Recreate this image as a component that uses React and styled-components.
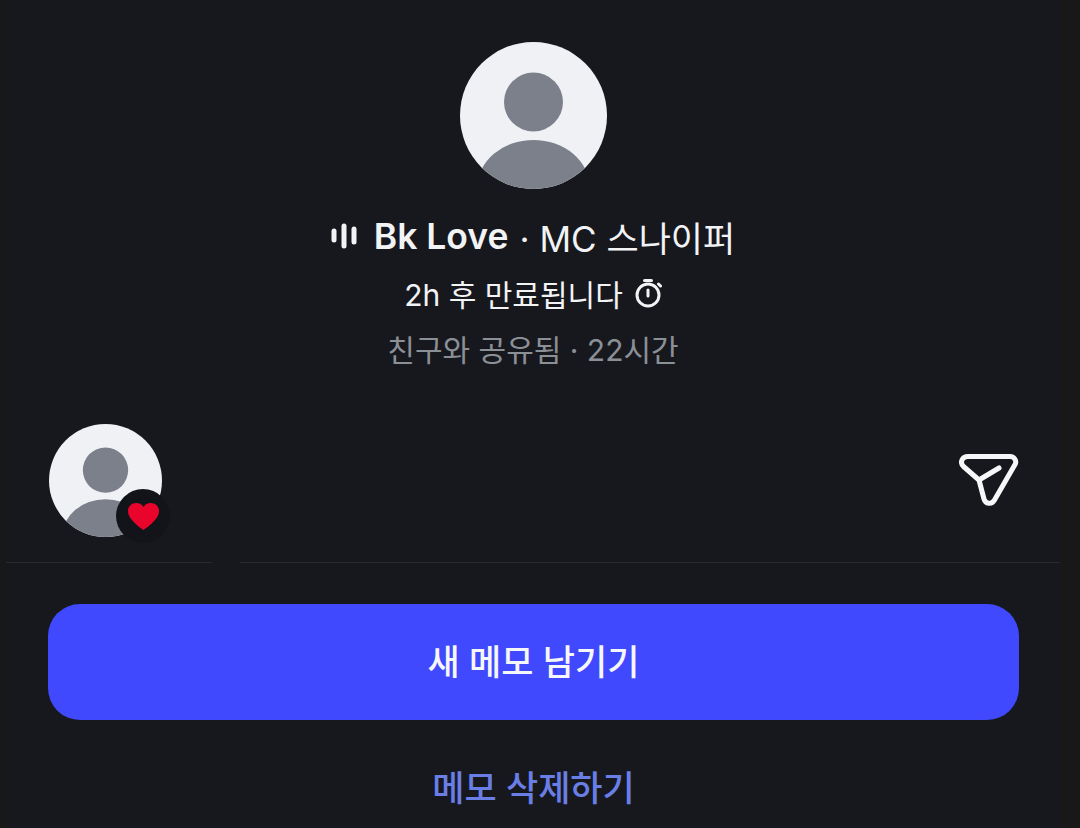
import React from "react";
import styled, { createGlobalStyle } from "styled-components";

const GlobalStyle = createGlobalStyle`
  html, body {
    margin: 0;
    padding: 0;
    background: #191818;
  }
  body {
    font-family: Inter, "Noto Sans CJK KR", sans-serif;
  }
`;

const Screen = styled.div`
  width: 1080px;
  height: 828px;
  overflow: hidden;
  background: #191818;
`;

const Panel = styled.div`
  width: 1054px;
  height: 828px;
  margin-left: 6px;
  background: #17181e;
  display: flex;
  flex-direction: column;
`;

const Profile = styled.section`
  display: flex;
  flex-direction: column;
  align-items: center;
  padding-top: 42px;
`;

const AvatarCircle = styled.div`
  position: relative;
  width: ${(p) => p.$size}px;
  height: ${(p) => p.$size}px;
  flex: none;
`;

const NameLine = styled.div`
  display: flex;
  align-items: center;
  height: 44px;
  margin-top: 25px;
  font-size: 35px;
  color: #f2f3f5;
  white-space: nowrap;
`;

const Name = styled.span`
  font-size: 35.5px;
  font-weight: 600;
  margin-left: 17px;
`;

const Song = styled.span`
  font-weight: 400;
  margin-left: 11px;
`;

const ExpiryLine = styled.div`
  display: flex;
  align-items: center;
  gap: 11px;
  height: 40px;
  margin-top: 15px;
  font-size: 30px;
  color: #f2f3f5;
  white-space: nowrap;
`;

const SharedLine = styled.div`
  height: 40px;
  line-height: 40px;
  margin-top: 17px;
  font-size: 30px;
  color: #8b9096;
  white-space: nowrap;
`;

const ReplyRow = styled.section`
  display: flex;
  align-items: center;
  justify-content: space-between;
  margin-top: 54px;
  padding: 0 41px 0 43px;
`;

const HeartBadge = styled.div`
  position: absolute;
  right: -8px;
  bottom: -6px;
  width: 54px;
  height: 54px;
  border-radius: 50%;
  background: #131419;
  display: flex;
  align-items: center;
  justify-content: center;
`;

const Divider = styled.div`
  height: 1px;
  margin-top: 25px;
  background: linear-gradient(
    to right,
    #29292f 0,
    #29292f 206px,
    #17181e 206px,
    #17181e 234px,
    #29292f 234px
  );
`;

const Actions = styled.section`
  display: flex;
  flex-direction: column;
  align-items: center;
  padding: 41px 41px 0 42px;
`;

const PrimaryButton = styled.button`
  width: 100%;
  height: 116px;
  padding: 0 0 5px;
  border: none;
  border-radius: 32px;
  background: #4049fd;
  color: #f6f7fb;
  font-family: inherit;
  font-size: 35px;
  font-weight: 500;
`;

const TextButton = styled.button`
  margin-top: 43px;
  padding: 0;
  border: none;
  background: none;
  color: #6a7fe6;
  font-family: inherit;
  font-size: 35px;
  font-weight: 500;
  line-height: 50px;
`;

const PersonIcon = () => (
  <svg width="100%" height="100%" viewBox="0 0 147 147">
    <defs>
      <clipPath id="avatarClip">
        <circle cx="73.5" cy="73.5" r="73.5" />
      </clipPath>
    </defs>
    <circle cx="73.5" cy="73.5" r="73.5" fill="#eff1f5" />
    <g clipPath="url(#avatarClip)">
      <circle cx="73.5" cy="60" r="29.5" fill="#7b808b" />
      <ellipse cx="73.5" cy="145" rx="56" ry="47" fill="#7b808b" />
    </g>
  </svg>
);

const WaveIcon = () => (
  <svg width="26" height="26" viewBox="0 0 26 26" fill="#f2f3f5">
    <rect x="0.5" y="5.5" width="5" height="14" rx="2.5" />
    <rect x="10.5" y="0.5" width="5" height="25" rx="2.5" />
    <rect x="20.5" y="3.5" width="5" height="18" rx="2.5" />
  </svg>
);

const TimerIcon = () => (
  <svg width="28" height="30" viewBox="0 0 28 30" fill="none" stroke="#f2f3f5" strokeWidth="3" strokeLinecap="round">
    <circle cx="14" cy="17" r="11" />
    <path d="M14 12v6" />
    <path d="M10.500 2.500h7" />
    <path d="M24.500 6l2 2" />
  </svg>
);

const HeartIcon = () => (
  <svg width="33" height="29" viewBox="0 0 32 29" preserveAspectRatio="none">
    <path
      d="M16 28C14.800 27 2 18.500 1 10.200 .4 4.800 4.200 1 9 1c3 0 5.600 1.500 7 4 1.400-2.500 4-4 7-4 4.800 0 8.600 3.800 8 9.200C30 18.500 17.200 27 16 28z"
      fill="#e8042a"
    />
  </svg>
);

const SendIcon = () => (
  <svg width="60" height="56" viewBox="0 0 60 56" fill="none" stroke="#f6f7f9" strokeWidth="5" strokeLinecap="round" strokeLinejoin="round">
    <path d="M9 3.500h42c4.500 0 7 4.500 5 8L35.500 47c-3 5-9 4-10.500-1L20 27 4.500 13.500C.5 9.500 3 3.500 9 3.500z" />
    <path d="M20 27L40 15" />
  </svg>
);

export default function App() {
  return (
    <Screen>
      <GlobalStyle />
      <Panel>
        <Profile>
          <AvatarCircle $size={147}>
            <PersonIcon />
          </AvatarCircle>
          <NameLine>
            <WaveIcon />
            <Name>Bk Love</Name>
            <Song>· MC 스나이퍼</Song>
          </NameLine>
          <ExpiryLine>
            2h 후 만료됩니다
            <TimerIcon />
          </ExpiryLine>
          <SharedLine>친구와 공유됨 · 22시간</SharedLine>
        </Profile>
        <ReplyRow>
          <AvatarCircle $size={113}>
            <PersonIcon />
            <HeartBadge>
              <HeartIcon />
            </HeartBadge>
          </AvatarCircle>
          <SendIcon />
        </ReplyRow>
        <Divider />
        <Actions>
          <PrimaryButton>새 메모 남기기</PrimaryButton>
          <TextButton>메모 삭제하기</TextButton>
        </Actions>
      </Panel>
    </Screen>
  );
}
